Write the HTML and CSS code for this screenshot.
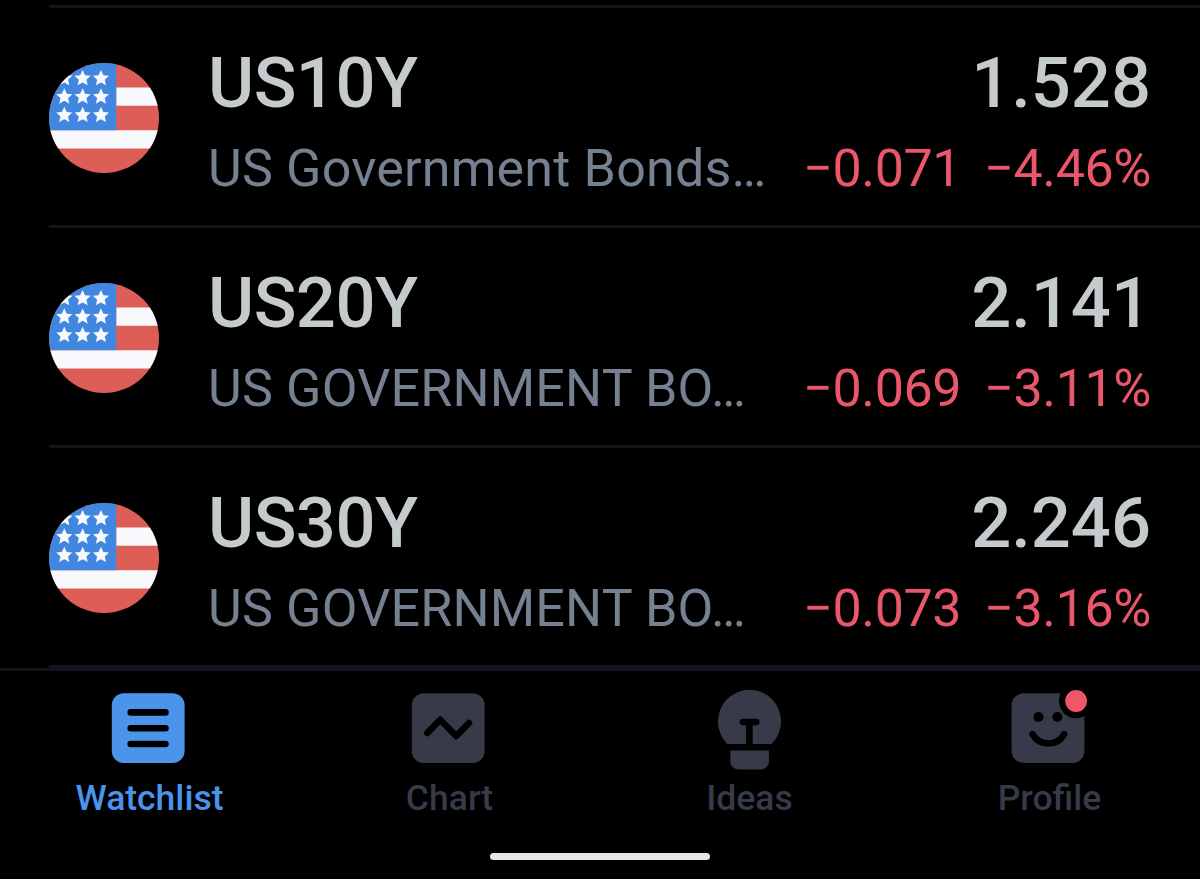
FILE: index.html
```
<!DOCTYPE html>
<html lang="en">
<head>
    <meta charset="UTF-8">
    <meta name="viewport" content="width=device-width, initial-scale=1.0">
    <title>Watchlist</title>
    <link rel="stylesheet" href="styles.css">
</head>
<body>

    <!-- shared flag symbol -->
    <svg class="symbols" width="0" height="0">
        <defs>
            <clipPath id="flag-clip"><circle cx="9" cy="9" r="9"/></clipPath>
            <path id="star" d="M0 -1.35 L.4 -.48 L1.32 -.4 L.62 .24 L.83 1.16 L0 .69 L-.83 1.16 L-.62 .24 L-1.32 -.4 L-.4 -.48 Z"/>
            <symbol id="flag-us" viewBox="0 0 18 18">
                <g clip-path="url(#flag-clip)">
                    <rect width="18" height="18" fill="#dd5e57"/>
                    <path d="M11 4h7v3h-7zM0 11h18v3H0z" fill="#f7f9fd"/>
                    <rect width="11" height="11" fill="#4287df"/>
                    <g fill="#f7f9fd">
                        <use href="#star" x="2.5" y="2.5"/>
                        <use href="#star" x="5.5" y="2.5"/>
                        <use href="#star" x="8.5" y="2.5"/>
                        <use href="#star" x="2.5" y="5.5"/>
                        <use href="#star" x="5.5" y="5.5"/>
                        <use href="#star" x="8.5" y="5.5"/>
                        <use href="#star" x="2.5" y="8.5"/>
                        <use href="#star" x="5.5" y="8.5"/>
                        <use href="#star" x="8.5" y="8.5"/>
                    </g>
                </g>
            </symbol>
        </defs>
    </svg>

    <main class="watchlist">
        <div class="row">
            <svg class="flag"><use href="#flag-us"/></svg>
            <div class="info">
                <div class="line main">
                    <span class="symbol">US10Y</span>
                    <span class="price">1.528</span>
                </div>
                <div class="line details">
                    <span class="name">US Government Bonds…</span>
                    <span class="change">−0.071</span>
                    <span class="percent">−4.46%</span>
                </div>
            </div>
        </div>

        <div class="row">
            <svg class="flag"><use href="#flag-us"/></svg>
            <div class="info">
                <div class="line main">
                    <span class="symbol">US20Y</span>
                    <span class="price">2.141</span>
                </div>
                <div class="line details">
                    <span class="name">US GOVERNMENT BO…</span>
                    <span class="change">−0.069</span>
                    <span class="percent">−3.11%</span>
                </div>
            </div>
        </div>

        <div class="row">
            <svg class="flag"><use href="#flag-us"/></svg>
            <div class="info">
                <div class="line main">
                    <span class="symbol">US30Y</span>
                    <span class="price">2.246</span>
                </div>
                <div class="line details">
                    <span class="name">US GOVERNMENT BO…</span>
                    <span class="change">−0.073</span>
                    <span class="percent">−3.16%</span>
                </div>
            </div>
        </div>
    </main>

    <nav class="tabs">
        <a class="tab active">
            <svg class="icon" viewBox="0 0 84 84">
                <rect class="shape" x="3.8" y="5.3" width="72.8" height="69.7" rx="12"/>
                <path class="cut" d="M22.7 24.4h34.8M22.7 40.2h34.8M22.7 56h34.8"/>
            </svg>
            <span>Watchlist</span>
        </a>
        <a class="tab">
            <svg class="icon" viewBox="0 0 84 84">
                <rect class="shape" x="3.8" y="5.3" width="72.8" height="69.7" rx="12"/>
                <path class="cut" d="M19.3 45 L32.2 31.8 L48.2 48 L61 35"/>
            </svg>
            <span>Chart</span>
        </a>
        <a class="tab">
            <svg class="icon" viewBox="0 0 84 84">
                <path class="shape" d="M19.4 55.9 A31.6 31.6 0 1 1 63.6 55.9 Z"/>
                <path class="shape" d="M22.3 62.4h38.6v11a8 8 0 0 1-8 8H30.3a8 8 0 0 1-8-8z"/>
                <path class="cut" d="M35 34h13.2M41.4 34v22"/>
            </svg>
            <span>Ideas</span>
        </a>
        <a class="tab">
            <svg class="icon" viewBox="0 0 84 84">
                <rect class="shape" x="3.6" y="5.3" width="72.8" height="69.7" rx="12"/>
                <circle class="eye" cx="30.5" cy="29" r="5"/>
                <circle class="eye" cx="49.4" cy="29" r="5"/>
                <path class="cut" d="M24.6 46.1 A18 18 0 0 0 56.2 46.1"/>
                <circle cx="68.1" cy="13" r="17.2"/>
                <circle class="dot" cx="68.1" cy="13" r="10.9"/>
            </svg>
            <span>Profile</span>
        </a>
    </nav>

    <div class="home-bar"></div>

</body>
</html>
```
FILE: styles.css
```
* {
    margin: 0;
    padding: 0;
    box-sizing: border-box;
}

body {
    width: 1200px;
    height: 879px;
    overflow: hidden;
    background: #000;
    font-family: Roboto, sans-serif;
    display: flex;
    flex-direction: column;
}

.symbols {
    display: block;
    flex: none;
}

.watchlist {
    margin: 5px 0 0 49px;
    border-top: 3px solid #13131c;
}

.row {
    display: flex;
    height: 220px;
    padding-right: 49px;
    border-bottom: 3px solid #13131c;
}

.row:last-child {
    border-color: #14141f;
}

.flag {
    width: 110px;
    height: 110px;
    margin: 55px 49px 0 0;
    flex: none;
}

.info {
    flex: 1;
    padding-top: 33px;
}

.line {
    display: flex;
    white-space: nowrap;
}

.main {
    justify-content: space-between;
    height: 84px;
    line-height: 84px;
    font-size: 70.5px;
    font-weight: 500;
    color: #c5cacd;
}

.symbol {
    letter-spacing: -0.5px;
}

.details {
    margin-top: 13px;
    height: 62px;
    line-height: 62px;
    font-size: 52px;
    color: #758091;
}

.name {
    flex: 1;
    letter-spacing: 0.2px;
}

.change,
.percent {
    letter-spacing: -0.4px;
    color: #ea566b;
}

.change {
    width: 181px;
}

.tabs {
    display: flex;
    height: 165px;
    border-top: 3px solid #14141f;
    padding-top: 17px;
}

.tab {
    width: 300px;
    display: flex;
    flex-direction: column;
    align-items: center;
    font-size: 35.5px;
    font-weight: 500;
    line-height: 42px;
    color: #363a49;
}

.tab span {
    margin-right: 1px;
}

.active {
    color: #4b94ec;
}

.icon {
    width: 84px;
    height: 84px;
    margin-bottom: 5px;
}

.shape {
    fill: currentColor;
}

.cut {
    fill: none;
    stroke: #000;
    stroke-width: 6.6;
    stroke-linecap: round;
    stroke-linejoin: round;
}

.dot {
    fill: #f0566a;
}

.home-bar {
    width: 220px;
    height: 7px;
    margin: 20px auto 0;
    border-radius: 4px;
    background: #e8e4e8;
}
```
